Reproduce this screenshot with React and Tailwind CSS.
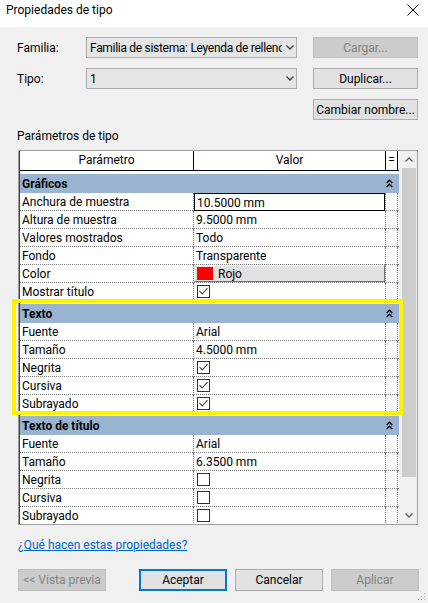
import React from 'react'

const groups = [
  {
    name: 'Gráficos',
    rows: [
      { label: 'Anchura de muestra', value: '10.5000 mm', kind: 'edit' },
      { label: 'Altura de muestra', value: '9.5000 mm' },
      { label: 'Valores mostrados', value: 'Todo' },
      { label: 'Fondo', value: 'Transparente' },
      { label: 'Color', value: 'Rojo', kind: 'color' },
      { label: 'Mostrar título', kind: 'check', checked: true },
    ],
  },
  {
    name: 'Texto',
    rows: [
      { label: 'Fuente', value: 'Arial' },
      { label: 'Tamaño', value: '4.5000 mm' },
      { label: 'Negrita', kind: 'check', checked: true },
      { label: 'Cursiva', kind: 'check', checked: true },
      { label: 'Subrayado', kind: 'check', checked: true },
    ],
  },
  {
    name: 'Texto de título',
    rows: [
      { label: 'Fuente', value: 'Arial' },
      { label: 'Tamaño', value: '6.3500 mm' },
      { label: 'Negrita', kind: 'check', checked: false },
      { label: 'Cursiva', kind: 'check', checked: false },
      { label: 'Subrayado', kind: 'check', checked: false },
    ],
  },
]

function Chevron({ up = false, color = '#404040', w = 8, h = 5 }) {
  return (
    <svg width={w} height={h} viewBox="0 0 8 5" className="shrink-0">
      <path
        d={up ? 'M0.5 4.5 L4 1 L7.5 4.5' : 'M0.5 0.5 L4 4 L7.5 0.5'}
        fill="none"
        stroke={color}
        strokeWidth="1.3"
      />
    </svg>
  )
}

function DoubleUp() {
  return (
    <svg width="7" height="9" viewBox="0 0 7 9" className="shrink-0">
      <path d="M0.7 4 L3.5 1.2 L6.3 4" fill="none" stroke="#000" strokeWidth="1.4" />
      <path d="M0.7 8 L3.5 5.2 L6.3 8" fill="none" stroke="#000" strokeWidth="1.4" />
    </svg>
  )
}

function Checkbox({ checked }) {
  return (
    <svg width="13" height="13" viewBox="0 0 13 13" className="shrink-0">
      <rect x="0.5" y="0.5" width="12" height="12" fill="#fff" stroke="#333" />
      {checked && <path d="M2.5 6.2 L5.2 9 L10.5 3.2" fill="none" stroke="#444" strokeWidth="1.1" />}
    </svg>
  )
}

function Select({ text }) {
  return (
    <div className="flex h-[21px] w-[211px] items-center border border-[#adadad] bg-[#e5e5e5] pl-[3px] pr-[2px]">
      <span className="mr-[4px] flex-1 overflow-hidden whitespace-nowrap tracking-[-0.3px]">{text}</span>
      <Chevron />
    </div>
  )
}

function Button({ children, disabled, primary, className = '' }) {
  const tone = disabled
    ? 'border border-[#bfbfbf] bg-[#cccccc] text-[#838383]'
    : primary
      ? 'border-2 border-[#0078d7] bg-[#e1e1e1] text-black'
      : 'border border-[#adadad] bg-[#e1e1e1] text-black'
  return (
    <div className={`flex items-center justify-center whitespace-nowrap ${tone} ${className}`}>{children}</div>
  )
}

function ValueCell({ row }) {
  if (row.kind === 'edit') {
    return (
      <div className="h-[18px] border border-black bg-white pl-[2px] pt-[1px] leading-[16px]">{row.value}</div>
    )
  }
  if (row.kind === 'color') {
    return (
      <div className="flex h-[17px] items-center gap-[5px] border border-t-white border-l-white border-b-[#707070] border-r-[#707070] bg-[#e1e1e1] pl-[2px] leading-[16px]">
        <span className="h-[13px] w-[16px] bg-[#ff0000]" />
        <span className="pt-[1px]">{row.value}</span>
      </div>
    )
  }
  if (row.kind === 'check') {
    return (
      <div className="flex h-[17px] items-center pl-[3px]">
        <Checkbox checked={row.checked} />
      </div>
    )
  }
  return <div className="pl-[2px] pt-[1px] leading-[17px]">{row.value}</div>
}

export default function App() {
  return (
    <div className="relative h-[603px] w-[428px] overflow-hidden bg-[#f0f0f0] font-['Roboto',sans-serif] text-[12px] text-black">
      {/* title bar */}
      <div className="flex h-[27px] items-start justify-between bg-white pl-[6px] pr-[9px] pt-[2px]">
        <span className="leading-[16px]">Propiedades de tipo</span>
        <svg width="12" height="12" viewBox="0 0 12 12" className="mt-[2px]">
          <path d="M0.5 0.5 L11.5 11.5 M11.5 0.5 L0.5 11.5" stroke="#000" strokeWidth="1" />
        </svg>
      </div>

      {/* familia / tipo */}
      <div className="mt-[10px] flex items-center pl-[17px]">
        <span className="w-[69px]">Familia:</span>
        <Select text="Familia de sistema: Leyenda de relleno de color" />
        <Button disabled className="ml-[16px] h-[21px] w-[105px]">Cargar...</Button>
      </div>
      <div className="mt-[10px] flex items-center pl-[17px]">
        <span className="w-[69px]">Tipo:</span>
        <Select text="1" />
        <Button className="ml-[16px] h-[21px] w-[105px]">Duplicar...</Button>
      </div>
      <div className="mt-[10px] flex justify-end pr-[10px]">
        <Button className="h-[21px] w-[105px]">Cambiar nombre...</Button>
      </div>

      <div className="mt-[8px] pl-[17px] leading-[16px]">Parámetros de tipo</div>

      {/* property grid */}
      <div className="ml-[18px] mt-[6px] flex h-[375px] w-[400px] border border-[#a0a0a0] bg-white">
        <div className="w-[380px] overflow-hidden border-l border-[#404040]">
          <div className="grid h-[20px] grid-cols-[174px_192px_12px] border-b border-black leading-[19px]">
            <div className="border-r border-black text-center">Parámetro</div>
            <div className="border-r border-black text-center">Valor</div>
            <div className="border-r border-black text-center">=</div>
          </div>
          {groups.map((g) => (
            <div key={g.name}>
              <div className="mt-[3px] flex h-[19px] w-[379px] items-center justify-between bg-[#99b4d1] pl-[2px] pr-[6px] font-bold">
                <span>{g.name}</span>
                <DoubleUp />
              </div>
              {g.rows.map((r) => (
                <div
                  key={g.name + r.label}
                  className="grid h-[18px] grid-cols-[174px_192px_12px] border-b border-dotted border-[#7a7a7a]"
                >
                  <div className="border-r border-dotted border-[#7a7a7a] pl-[2px] pt-[1px] leading-[17px]">{r.label}</div>
                  <div className="border-r border-dotted border-[#7a7a7a]">
                    <ValueCell row={r} />
                  </div>
                  <div className="border-r border-dotted border-[#7a7a7a]" />
                </div>
              ))}
            </div>
          ))}
        </div>
        {/* scrollbar */}
        <div className="flex w-[18px] flex-col bg-[#f0f0f0]">
          <div className="flex h-[17px] items-center justify-center pl-[2px]">
            <Chevron up color="#606060" w={8} h={5} />
          </div>
          <div className="ml-[3px] h-[309px] w-[14px] bg-[#cdcdcd]" />
          <div className="flex-1" />
          <div className="flex h-[17px] items-center justify-center pl-[2px]">
            <Chevron color="#606060" w={8} h={5} />
          </div>
        </div>
      </div>

      <div className="mt-[12px] pl-[18px] leading-[16px]">
        <span className="text-[#0066cc] underline">¿Qué hacen estas propiedades?</span>
      </div>

      {/* footer buttons */}
      <div className="mt-[16px] flex items-center pl-[18px]">
        <Button disabled className="h-[22px] w-[88px]">&lt;&lt; Vista previa</Button>
        <Button primary className="ml-[33px] h-[22px] w-[88px]">Aceptar</Button>
        <Button className="ml-[8px] h-[22px] w-[88px]">Cancelar</Button>
        <Button disabled className="ml-[8px] h-[22px] w-[88px]">Aplicar</Button>
      </div>

      {/* annotation highlight */}
      <div className="pointer-events-none absolute left-[12px] top-[299px] h-[116px] w-[391px] border-[4px] border-[#fff200]" />

      {/* resize grip */}
      <svg width="8" height="8" viewBox="0 0 8 8" className="absolute bottom-[2px] right-[2px]">
        <rect x="6" y="0" width="1" height="1" fill="#b0b0b0" />
        <rect x="3" y="3" width="1" height="1" fill="#b0b0b0" />
        <rect x="6" y="3" width="1" height="1" fill="#b0b0b0" />
        <rect x="0" y="6" width="1" height="1" fill="#b0b0b0" />
        <rect x="3" y="6" width="1" height="1" fill="#b0b0b0" />
        <rect x="6" y="6" width="1" height="1" fill="#b0b0b0" />
      </svg>
    </div>
  )
}
